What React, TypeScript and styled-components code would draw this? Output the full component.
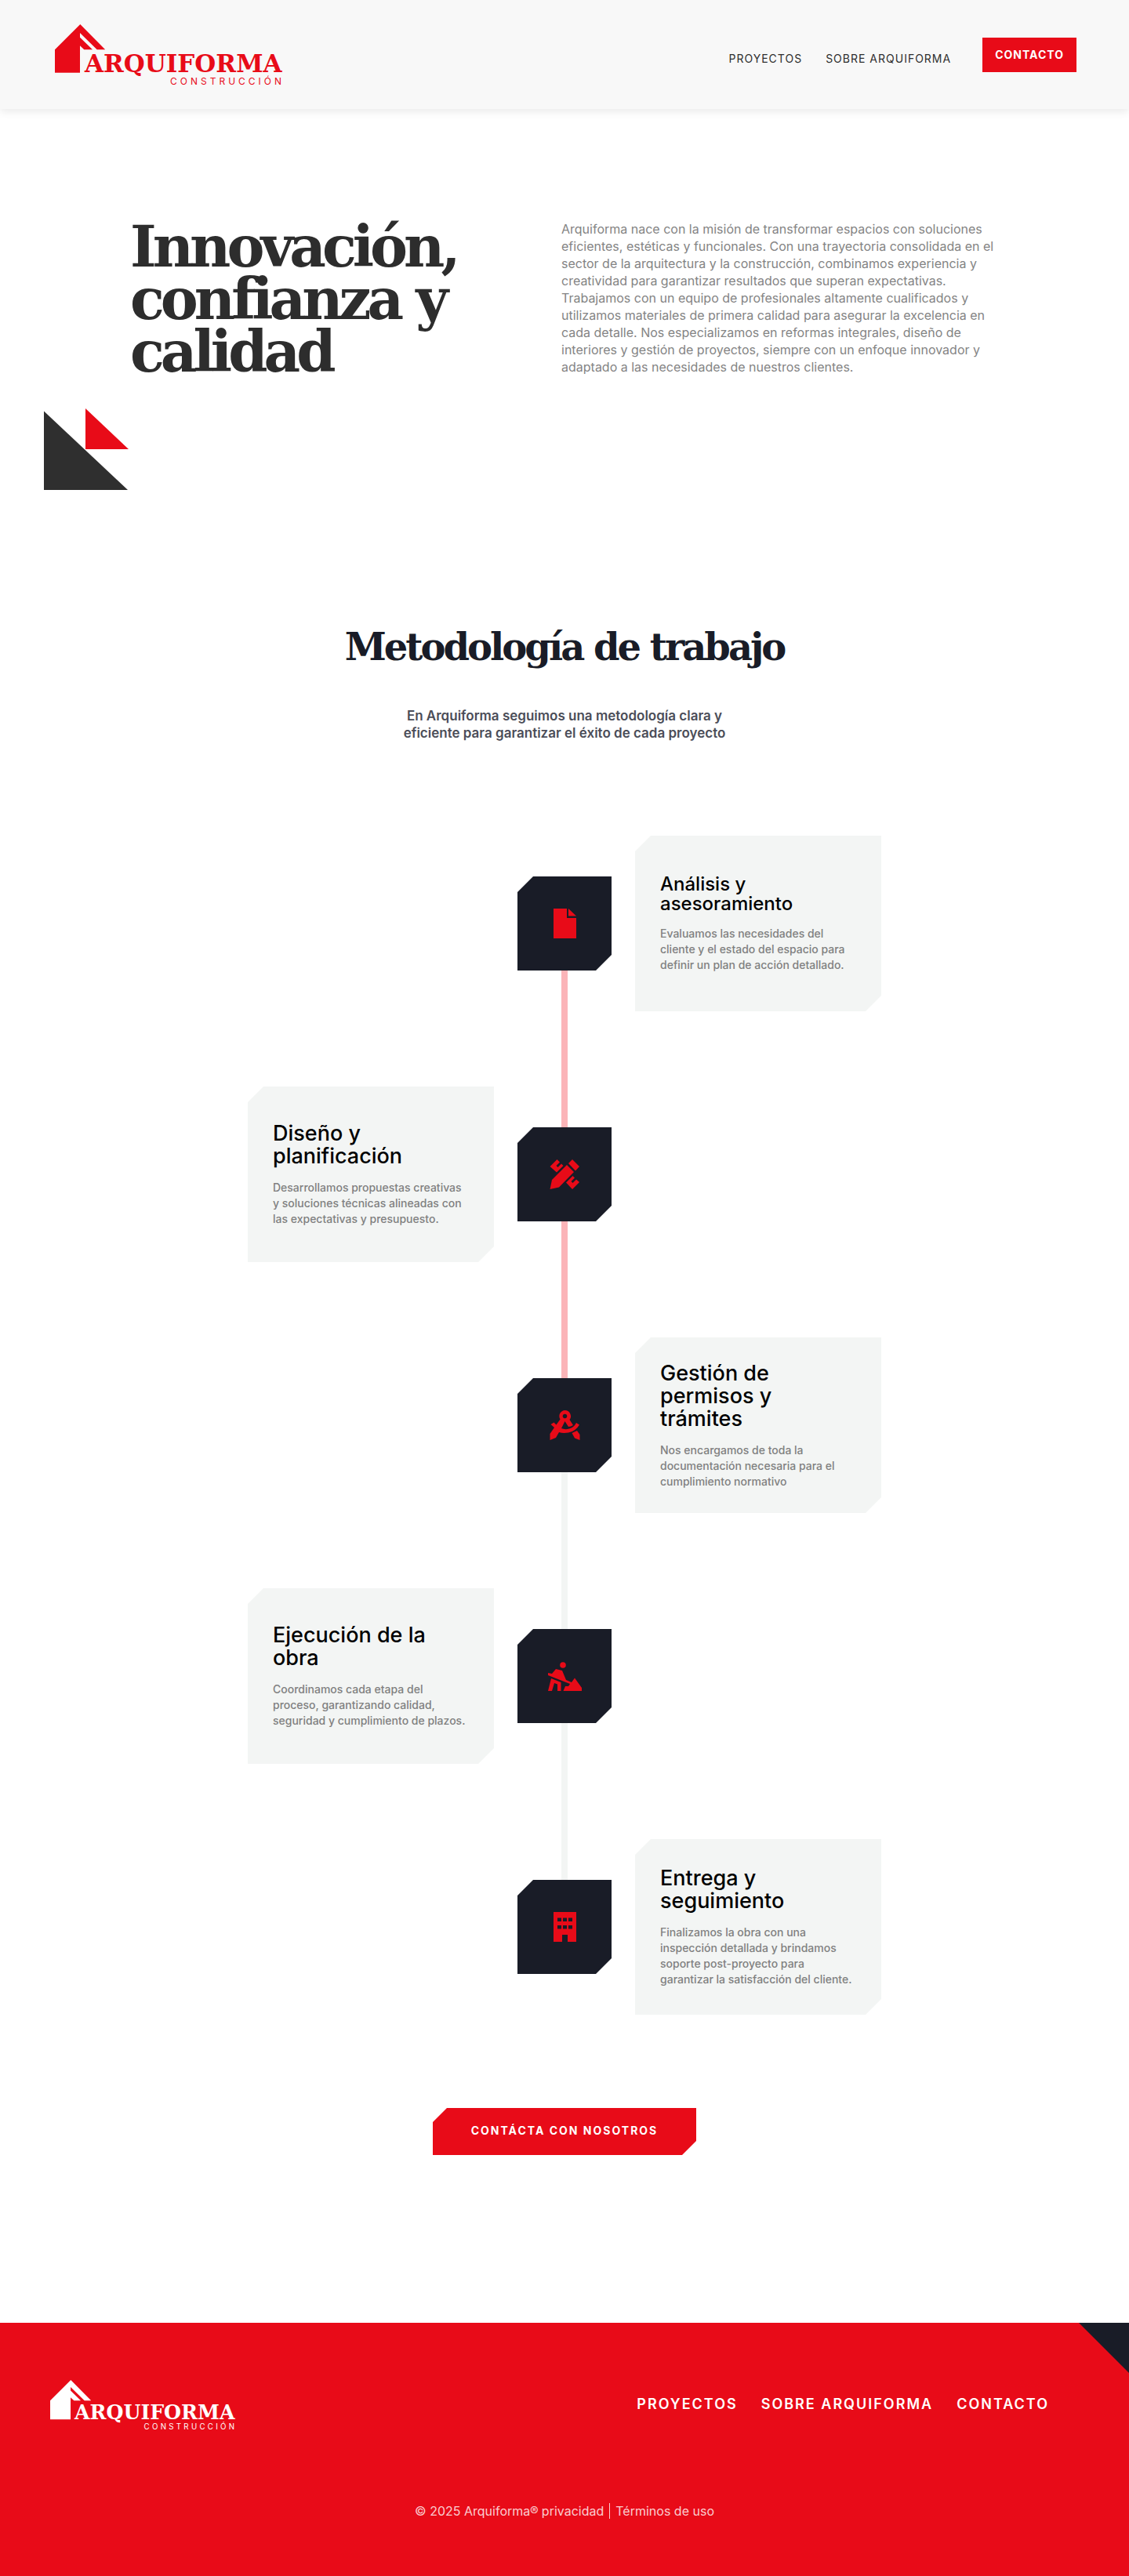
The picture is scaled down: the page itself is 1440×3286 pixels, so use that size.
import React from 'react';
import styled, { createGlobalStyle } from 'styled-components';

const red = '#e80b18';
const navy = '#191c27';
const mist = '#f3f5f4';
const slab = '"DejaVu Serif", serif';

const GlobalStyle = createGlobalStyle`
  *, *::before, *::after { box-sizing: border-box; }
  body {
    margin: 0;
    background: #fff;
    font-family: Inter, "Liberation Sans", sans-serif;
  }
  h1, h2, h3, p, ol { margin: 0; padding: 0; }
  a { color: inherit; text-decoration: none; }
`;

const Header = styled.header`
  display: flex;
  align-items: center;
  justify-content: space-between;
  height: 139px;
  padding: 0 67px 0 70px;
  background: #f8f8f8;
  box-shadow: 0 4px 10px rgba(0, 0, 0, 0.08);
`;

const HeaderNav = styled.nav`
  display: flex;
  align-items: center;
  font-size: 14px;
  line-height: 20px;
  letter-spacing: 1px;
  color: #2e2e2e;
`;

const HeaderLink = styled.a`
  padding-top: 10px;
  margin-right: 30px;
`;

const HeaderCta = styled.a`
  margin-left: 10px;
  padding: 12px 16px;
  background: ${red};
  color: #fff;
  font-weight: 700;
`;

const LogoSvg = styled.svg<{ $width: number }>`
  display: block;
  width: ${(p) => p.$width}px;
  height: auto;
  overflow: visible;
`;

function Logo({ color, width }: { color: string; width: number }) {
  return (
    <LogoSvg $width={width} viewBox="0 0 290 77" fill={color} role="img" aria-label="Arquiforma Construcción">
      <path d="M0 32.3 32.3 0 64.2 32.3H53.7L32 11V16.7L48 32.3H37.3L32 27.3V61.7H0Z" />
      <text x="38" y="61" fontFamily="DejaVu Serif, serif" fontWeight="700" fontSize="31">ARQUIFORMA</text>
      <text x="147" y="77" fontFamily="Inter, sans-serif" fontSize="12" letterSpacing="4">CONSTRUCCIÓN</text>
    </LogoSvg>
  );
}

const Hero = styled.section`
  display: grid;
  grid-template-columns: minmax(0, 550fr) minmax(0, 576fr);
  padding: 142px 148px 0 166px;
`;

const HeroTitle = styled.h1`
  font-family: ${slab};
  font-size: 72px;
  line-height: 67px;
  font-weight: 700;
  letter-spacing: -5px;
  color: #2d2d2d;
`;

const HeroText = styled.p`
  font-size: 16px;
  line-height: 22px;
  color: #848484;
`;

const Triangles = styled.svg`
  display: block;
  width: 108px;
  height: 104px;
  margin: 39px 0 0 56px;
`;

const Method = styled.section`
  display: flex;
  flex-direction: column;
  align-items: center;
  padding: 172px 24px 214px;
`;

const MethodTitle = styled.h2`
  font-family: ${slab};
  font-size: 48px;
  line-height: 56px;
  font-weight: 700;
  letter-spacing: -3px;
  text-align: center;
  color: ${navy};
`;

const MethodLead = styled.p`
  width: 440px;
  margin-top: 49px;
  font-size: 17px;
  line-height: 22px;
  font-weight: 600;
  text-align: center;
  color: #4b4d58;
`;

const Timeline = styled.ol`
  display: flex;
  flex-direction: column;
  gap: 96px;
  margin-top: 120px;
  list-style: none;
`;

const Step = styled.li<{ $left: boolean }>`
  display: grid;
  grid-template-columns: 314px 120px 314px;
  grid-template-areas: ${(p) => (p.$left ? '"card tile ."' : '". tile card"')};
  column-gap: 30px;
  align-items: center;
`;

const Tile = styled.div<{ $line?: string }>`
  grid-area: tile;
  position: relative;
  height: 120px;
  &::after {
    content: '';
    display: ${(p) => (p.$line ? 'block' : 'none')};
    position: absolute;
    top: 120px;
    left: 56px;
    width: 8px;
    height: 200px;
    background: ${(p) => p.$line};
  }
`;

const cut = (n: number) =>
  `polygon(${n}px 0, 100% 0, 100% calc(100% - ${n}px), calc(100% - ${n}px) 100%, 0 100%, 0 ${n}px)`;

const TileFace = styled.div`
  display: flex;
  align-items: center;
  justify-content: center;
  height: 120px;
  background: ${navy};
  clip-path: ${cut(20)};
`;

const StepIcon = styled.svg`
  width: 48px;
  height: 48px;
  fill: ${red};
`;

const Card = styled.article`
  grid-area: card;
  display: flex;
  flex-direction: column;
  justify-content: center;
  gap: 16px;
  height: 224px;
  padding: 0 32px;
  background: ${mist};
  clip-path: ${cut(20)};
`;

const CardTitle = styled.h3<{ $small?: boolean }>`
  font-size: ${(p) => (p.$small ? 24 : 27)}px;
  line-height: ${(p) => (p.$small ? 25 : 29)}px;
  font-weight: 500;
  color: #000;
`;

const CardText = styled.p`
  font-size: 14px;
  line-height: 20px;
  font-weight: 500;
  color: #808080;
`;

const ContactButton = styled.button`
  margin-top: 119px;
  width: 336px;
  height: 60px;
  padding: 0 0 2px;
  border: 0;
  background: ${red};
  clip-path: ${cut(18)};
  color: #fff;
  font: 700 14px/20px Inter, sans-serif;
  letter-spacing: 2px;
  cursor: pointer;
`;

const Footer = styled.footer`
  position: relative;
  padding: 73px 102px 72px 64px;
  background: ${red};
  color: #fff;
  &::before {
    content: '';
    position: absolute;
    top: 0;
    right: 0;
    width: 64px;
    height: 64px;
    background: ${navy};
    clip-path: polygon(0 0, 100% 0, 100% 100%);
  }
`;

const FooterTop = styled.div`
  display: flex;
  align-items: center;
  justify-content: space-between;
`;

const FooterNav = styled.nav`
  display: flex;
  gap: 30px;
  font-size: 18px;
  line-height: 24px;
  font-weight: 600;
  letter-spacing: 2px;
`;

const Legal = styled.p`
  display: flex;
  align-items: center;
  justify-content: center;
  margin-top: 92px;
  margin-right: -38px;
  font-size: 16px;
  line-height: 24px;
  color: rgba(255, 255, 255, 0.8);
`;

const LegalLink = styled.a<{ $divided?: boolean }>`
  line-height: 20px;
  margin-left: ${(p) => (p.$divided ? 7 : 4)}px;
  padding-left: ${(p) => (p.$divided ? 7 : 0)}px;
  border-left: ${(p) => (p.$divided ? '1px solid' : '0')};
`;

const DocumentIcon = (
  <path d="M10 5H27V17H39V43H10ZM29 5 39 14.5H29Z" />
);

const DesignIcon = (
  <path d="M5.5 43 8 31 27 12 36 21 17 40.500ZM29 10 34 5 43 14 38 19.500ZM5.500 14 14.500 5 18 8.500 13.500 13 15.500 15 20 10.500 22.500 13 14 21.500ZM26 34.500 34.500 26 37 28.500 32.500 33 34.500 35 39 30.500 43 34 34 43Z" />
);

const CompassIcon = (
  <>
    <path
      fillRule="evenodd"
      d="M24.500 5a7.500 7.500 0 0 1 6 12L35 24Q32 26 29 26L24.500 19 20 28Q24.500 30 30 28.500 36 27 39 21L43 23.500Q38 32 29 33.500 22 34.500 17 33L13 40 5.500 43 5.500 35 11 27 6.500 23 10.500 20.500 13.500 23.500 18.500 16.500A7.500 7.500 0 0 1 24.500 5ZM24.500 9.700a2.800 2.800 0 1 0 .01 0Z"
    />
    <path d="M33.500 34 40 31 43.500 36V43L37 40.500Z" />
  </>
);

const DiggerIcon = (
  <>
    <circle cx="22" cy="10" r="3.800" />
    <path d="M3 20 8 21 13 15 21 17 26 29 33 32 37 26.500 46 39V43H22.500L25 37H29L31 34 3 23ZM7 27 19.500 32V43H15V34.500L11 33 8 43H3Z" />
  </>
);

const BuildingIcon = (
  <path
    fillRule="evenodd"
    d="M10 5H39V43H28V34H21V43H10ZM15 12.500V17H20V12.500ZM22 12.500V17H27V12.500ZM29 12.500V17H34V12.500ZM15 22V26.500H20V22ZM22 22V26.500H27V22ZM29 22V26.500H34V22Z"
  />
);

const steps = [
  {
    title: 'Análisis y asesoramiento',
    text: 'Evaluamos las necesidades del cliente y el estado del espacio para definir un plan de acción detallado.',
    icon: DocumentIcon,
    line: '#fbb4b8',
  },
  {
    title: 'Diseño y planificación',
    text: 'Desarrollamos propuestas creativas y soluciones técnicas alineadas con las expectativas y presupuesto.',
    icon: DesignIcon,
    line: '#fbb4b8',
  },
  {
    title: 'Gestión de permisos y trámites',
    text: 'Nos encargamos de toda la documentación necesaria para el cumplimiento normativo',
    icon: CompassIcon,
    line: mist,
  },
  {
    title: 'Ejecución de la obra',
    text: 'Coordinamos cada etapa del proceso, garantizando calidad, seguridad y cumplimiento de plazos.',
    icon: DiggerIcon,
    line: mist,
  },
  {
    title: 'Entrega y seguimiento',
    text: 'Finalizamos la obra con una inspección detallada y brindamos soporte post-proyecto para garantizar la satisfacción del cliente.',
    icon: BuildingIcon,
    line: undefined,
  },
];

export default function App() {
  return (
    <>
      <GlobalStyle />
      <Header>
        <a href="#inicio"><Logo color={red} width={290} /></a>
        <HeaderNav>
          <HeaderLink href="#proyectos">PROYECTOS</HeaderLink>
          <HeaderLink href="#sobre">SOBRE ARQUIFORMA</HeaderLink>
          <HeaderCta href="#contacto">CONTACTO</HeaderCta>
        </HeaderNav>
      </Header>
      <main>
        <Hero>
          <HeroTitle>Innovación, confianza y calidad</HeroTitle>
          <HeroText>
            Arquiforma nace con la misión de transformar espacios con soluciones eficientes, estéticas y
            funcionales. Con una trayectoria consolidada en el sector de la arquitectura y la construcción,
            combinamos experiencia y creatividad para garantizar resultados que superan expectativas. Trabajamos
            con un equipo de profesionales altamente cualificados y utilizamos materiales de primera calidad para
            asegurar la excelencia en cada detalle. Nos especializamos en reformas integrales, diseño de
            interiores y gestión de proyectos, siempre con un enfoque innovador y adaptado a las necesidades de
            nuestros clientes.
          </HeroText>
        </Hero>
        <Triangles viewBox="0 0 108 104" aria-hidden="true">
          <path d="M0 3.500V104H107Z" fill="#2f2f2f" />
          <path d="M53 0V52H108Z" fill={red} />
        </Triangles>
        <Method>
          <MethodTitle>Metodología de trabajo</MethodTitle>
          <MethodLead>
            En Arquiforma seguimos una metodología clara y eficiente para garantizar el éxito de cada proyecto
          </MethodLead>
          <Timeline>
            {steps.map((s, i) => (
              <Step key={s.title} $left={i % 2 === 1}>
                <Tile $line={s.line}>
                  <TileFace>
                    <StepIcon viewBox="0 0 48 48" aria-hidden="true">{s.icon}</StepIcon>
                  </TileFace>
                </Tile>
                <Card>
                  <CardTitle $small={i === 0}>{s.title}</CardTitle>
                  <CardText>{s.text}</CardText>
                </Card>
              </Step>
            ))}
          </Timeline>
          <ContactButton type="button">CONTÁCTA CON NOSOTROS</ContactButton>
        </Method>
      </main>
      <Footer>
        <FooterTop>
          <a href="#inicio"><Logo color="#fff" width={236} /></a>
          <FooterNav>
            <a href="#proyectos">PROYECTOS</a>
            <a href="#sobre">SOBRE ARQUIFORMA</a>
            <a href="#contacto">CONTACTO</a>
          </FooterNav>
        </FooterTop>
        <Legal>
          <span>© 2025 Arquiforma®</span>
          <LegalLink href="#privacidad">privacidad</LegalLink>
          <LegalLink href="#terminos" $divided>Términos de uso</LegalLink>
        </Legal>
      </Footer>
    </>
  );
}
